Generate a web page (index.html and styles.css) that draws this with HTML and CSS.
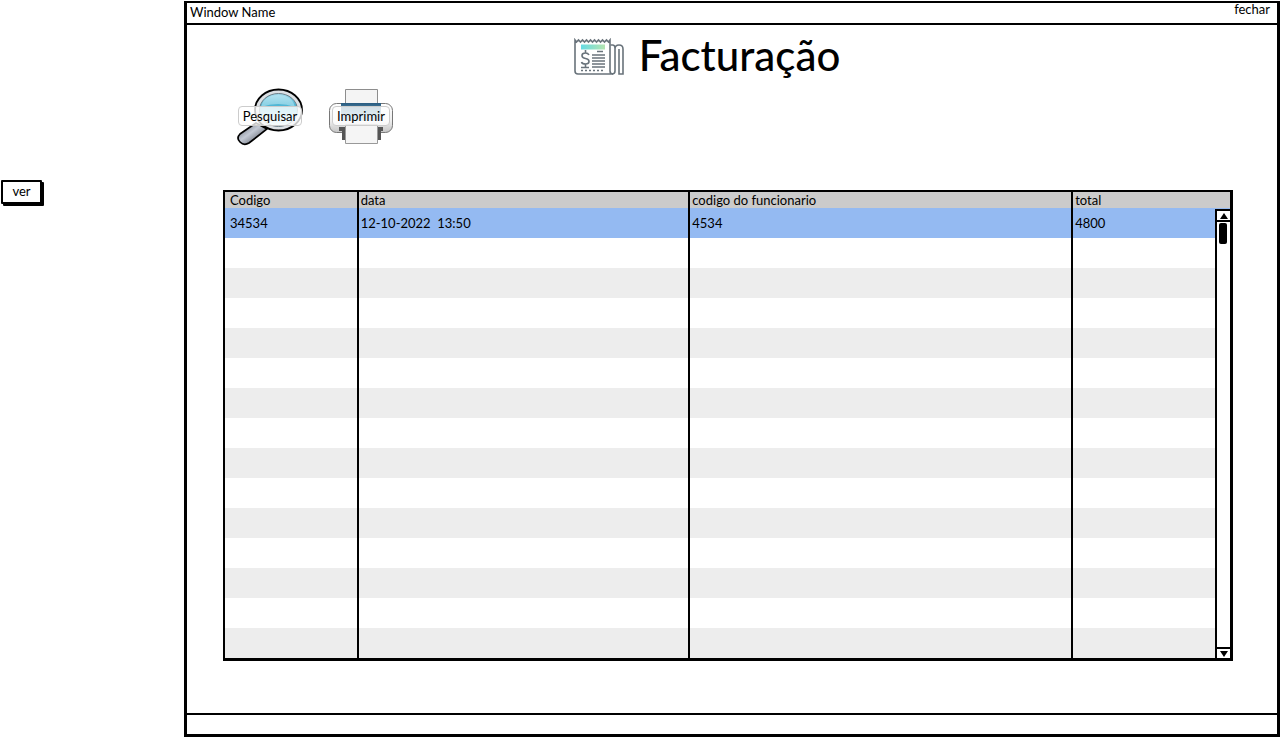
FILE: index.html
```html
<!DOCTYPE html>
<html lang="pt">
<head>
<meta charset="utf-8">
<title>Facturação</title>
<link rel="stylesheet" href="styles.css">
</head>
<body>
<div class="page">
  <aside class="side"><button class="view-btn" type="button">ver</button></aside>
  <main class="window">
    <header class="titlebar"><span>Window Name</span><button class="close" type="button">fechar</button></header>
    <div class="content">
      <div class="heading">
        <svg class="heading-icon" viewBox="0 0 50 38" aria-hidden="true">
          <defs><linearGradient id="band"><stop offset="0" stop-color="#65dbe4"/><stop offset="1" stop-color="#b5e5b0"/></linearGradient></defs>
          <g fill="none" stroke="#69737b" stroke-width="1.6">
            <path d="M1 2l1.500 2 2-2 2 2 2-2 2 2 2-2 2 2 2-2 2 2 2-2 2 2 2-2 2 2 2-2 2 2 2-2 2 2 1.500-2V33q0 3 3 3H4q-3 0-3-3z"/>
            <path d="M36.500 7h2q2.500 0 2.500 3v23q0 3-3 3M41 33V11q0-4 4-4t4 4v25h-4V11"/>
            <path d="M15 17q-1-2-3.500-2-3.500 0-3.500 2.500t3.500 3 3.500 3-3.500 2.500q-3.500 0-4-2M11.500 12v3m0 11v3M23 13.500h6M18 17h13M18 20h13M18 23h13M18 26h13M18 29h13M7 29.500h8"/>
            <path d="M7 32.500h24" stroke-dasharray="2 2"/>
          </g>
          <path d="M7 6.500h24v5H7z" fill="url(#band)"/>
        </svg>
        <h1>Facturação</h1>
      </div>
      <div class="tools">
        <button class="tool" type="button">
          <svg viewBox="0 0 68 58" aria-hidden="true">
            <defs>
              <linearGradient id="lens" x2="0" y2="1"><stop offset="0" stop-color="#a5dced"/><stop offset=".35" stop-color="#4cb5d4"/><stop offset="1" stop-color="#e1f8fd"/></linearGradient>
              <linearGradient id="grip" x2="1" y2="1"><stop offset="0" stop-color="#555b65"/><stop offset=".45" stop-color="#c3c9d4"/><stop offset="1" stop-color="#353a43"/></linearGradient>
            </defs>
            <path d="M20 35L4 46q-4 4 0 8t9 1L31 41z" fill="url(#grip)" stroke="#000" stroke-width="1.700"/>
            <ellipse cx="42.500" cy="22" rx="23.500" ry="20.500" fill="#dce0e4" stroke="#000" stroke-width="1.800"/>
            <ellipse cx="42.500" cy="22" rx="19" ry="16.500" fill="url(#lens)" stroke="#6d7e87"/>
            <path d="M25 19q3-12 17-12t17 12q-17-6-34 0z" fill="#c9edf5" opacity=".5"/>
          </svg>
          <span>Pesquisar</span>
        </button>
        <button class="tool" type="button">
          <svg viewBox="0 0 68 58" aria-hidden="true">
            <defs>
              <linearGradient id="shell" x2="0" y2="1"><stop offset="0" stop-color="#fff"/><stop offset=".6" stop-color="#eee"/><stop offset="1" stop-color="#c4c4c4"/></linearGradient>
              <linearGradient id="slot" x2="0" y2="1"><stop offset="0" stop-color="#295b80"/><stop offset="1" stop-color="#86c5db"/></linearGradient>
            </defs>
            <path d="M18.500 18V1.500h32V18" fill="#f4f4f4" stroke="#8d8d8d"/>
            <rect x="2.500" y="15.500" width="63" height="29" rx="7" fill="url(#shell)" stroke="#777"/>
            <path d="M14 15h40v18H14z" fill="url(#slot)"/>
            <path d="M12 39h44v4H54v9H50V43H18v9H15v-9H12z" fill="#555"/>
            <path d="M18.500 36.500h32v19h-32z" fill="#f5f5f5" stroke="#999"/>
          </svg>
          <span>Imprimir</span>
        </button>
      </div>
      <div class="grid">
        <table>
          <colgroup><col class="c-code"><col class="c-date"><col class="c-staff"><col></colgroup>
          <thead><tr><th scope="col">Codigo</th><th scope="col">data</th><th scope="col">codigo do funcionario</th><th scope="col">total</th></tr></thead>
          <tbody>
            <tr class="selected"><td>34534</td><td>12-10-2022 &nbsp;13:50</td><td>4534</td><td>4800</td></tr>
            <tr><td></td><td></td><td></td><td></td></tr>
            <tr><td></td><td></td><td></td><td></td></tr>
            <tr><td></td><td></td><td></td><td></td></tr>
            <tr><td></td><td></td><td></td><td></td></tr>
            <tr><td></td><td></td><td></td><td></td></tr>
            <tr><td></td><td></td><td></td><td></td></tr>
            <tr><td></td><td></td><td></td><td></td></tr>
            <tr><td></td><td></td><td></td><td></td></tr>
            <tr><td></td><td></td><td></td><td></td></tr>
            <tr><td></td><td></td><td></td><td></td></tr>
            <tr><td></td><td></td><td></td><td></td></tr>
            <tr><td></td><td></td><td></td><td></td></tr>
            <tr><td></td><td></td><td></td><td></td></tr>
            <tr><td></td><td></td><td></td><td></td></tr>
          </tbody>
        </table>
        <div class="scroll">
          <button type="button" aria-label="Subir"><svg viewBox="0 0 8 6"><path d="M4 0l4 6H0z"/></svg></button>
          <div class="track"><div class="thumb"></div></div>
          <button type="button" aria-label="Descer"><svg viewBox="0 0 8 6"><path d="M0 0h8L4 6z"/></svg></button>
        </div>
      </div>
    </div>
    <footer class="status"></footer>
  </main>
</div>
</body>
</html>
```
FILE: styles.css
```css
* { box-sizing: border-box; }
body { margin: 0; background: #fff; color: #000; font: 13px/16px Lato, "Open Sans", sans-serif; }
button { font: inherit; color: inherit; padding: 0; border: 0; background: none; cursor: pointer; }
svg { display: block; }
.page { display: flex; min-height: 100vh; }
.side { flex: 0 0 184px; padding: 180px 0 0 1px; }
.view-btn { width: 41px; height: 24px; padding-bottom: 2px; background: #fff; border: 2px solid #000; border-radius: 1px; box-shadow: 2px 2px 0 #000; }
.window { flex: 1; display: flex; flex-direction: column; border: solid #000; border-width: 2px 3px 3px; margin: 1px 0; }
.titlebar { display: flex; justify-content: space-between; align-items: flex-start; height: 22px; padding: 1px 7px 0 3px; border-bottom: 2px solid #000; }
.close { margin-top: -3px; }
.content { flex: 1; padding: 10px 44px 48px 36px; }
.heading { display: flex; justify-content: center; gap: 15px; margin-right: 42px; }
.heading-icon { width: 50px; height: 38px; margin-top: 3px; }
h1 { margin: 0; font-size: 42px; line-height: 40px; font-weight: 500; }
.tools { display: flex; gap: 23px; margin: 12px 0 0 13px; }
.tool { position: relative; width: 68px; height: 58px; }
.tool svg { width: 68px; height: 58px; }
.tool span { position: absolute; top: 18px; left: 0; right: 0; margin: 0 auto; width: max-content; padding: 1px 4px; background: rgba(255,255,255,.78); border: 1px solid #ccc; border-radius: 4px; }
.grid { position: relative; margin-top: 44px; border: solid #000; border-width: 2px 3px 3px 2px; }
table { width: 100%; table-layout: fixed; border-collapse: separate; border-spacing: 0; }
.c-code { width: 13.1%; }
.c-date { width: 33%; }
.c-staff { width: 38.1%; }
th, td { padding: 0 0 0 2px; text-align: left; font-weight: 400; white-space: nowrap; }
th { height: 16px; background: #cbcbcb; }
td { height: 30px; }
th:first-child, td:first-child { padding-left: 5px; }
th + th, td + td { border-left: 2px solid #000; }
tbody tr:nth-child(odd) { background: #ededed; }
tbody tr.selected { background: #94baf2; }
.scroll { position: absolute; top: 17px; right: 0; bottom: 0; width: 15px; display: flex; flex-direction: column; background: #fff; border: solid #000; border-width: 2px 0 0 2px; }
.scroll button { height: 11px; display: grid; place-items: center; border-bottom: 2px solid #000; }
.scroll button:last-child { border-top: 2px solid #000; border-bottom: 0; }
.scroll svg { width: 8px; height: 6px; }
.track { flex: 1; padding: 1px 2px; }
.thumb { height: 21px; width: 8px; background: #000; border-radius: 2px; }
.status { height: 21px; border-top: 2px solid #000; }
```
